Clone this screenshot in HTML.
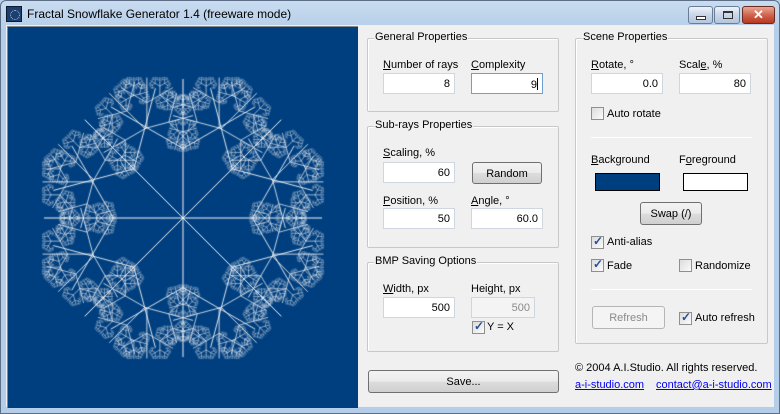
<!DOCTYPE html>
<html><head><meta charset="utf-8"><style>
*{margin:0;padding:0;box-sizing:border-box}
body{width:780px;height:414px;overflow:hidden;font-family:"Liberation Sans",sans-serif;font-size:11px;color:#000;background:#bcd3ea;position:relative}
.win{position:absolute;left:0;top:0;width:780px;height:414px;border:1px solid #5c6f86;border-radius:6px 6px 0 0;background:linear-gradient(#c9dcf0,#b4cde8 30px,#b4cde8)}
.title{position:absolute;left:27px;top:7px;font-size:12px;color:#000}
.icon{position:absolute;left:6px;top:6px;width:16px;height:16px;background:#1c3f6e;border:1px solid #0c1a30}
.icon:after{content:"";position:absolute;left:3px;top:3px;width:8px;height:8px;border-radius:50%;border:1px dotted #9cc4ec}
.tb{position:absolute;top:6px;height:18px;border:1px solid #6a7d96;border-radius:3px;background:linear-gradient(#eef3fa,#c8d6e8 50%,#b3c6de)}
.client{position:absolute;left:6px;top:25px;width:768px;height:382px;background:#f0f0f0}
canvas{position:absolute;left:7px;top:26px;border-left:1px solid #888;border-top:1px solid #888}
.abs{position:absolute;white-space:nowrap}
.grp{position:absolute;border:1px solid #c8c8c8;border-radius:2px;box-shadow:inset 1px 1px 0 #fff}
.grp span{position:absolute;left:6px;top:-8px;background:#f0f0f0;padding:0 1px}
.in{position:absolute;height:21px;background:#fff;border:1px solid #cfd6e0;text-align:right;padding:4px 4px 0 0}
.btn{position:absolute;border:1px solid #707070;border-radius:3px;background:linear-gradient(#f3f3f3,#ebebeb 50%,#dddddd 51%,#cfcfcf);text-align:center;padding-top:5px}
.cb{position:absolute;width:13px;height:13px;border:1px solid #8e8f8f;background:linear-gradient(135deg,#dcdcdc,#fbfbfb)}
.cb.on:after{content:"✓";position:absolute;left:1px;top:-3px;font-size:12px;color:#2a4e9a;font-weight:bold}
.sep{position:absolute;height:1px;background:#a0a0a0;border-bottom:1px solid #fff}
u{text-decoration:underline}
a{color:#0000ee;text-decoration:underline}
</style></head><body>
<div class="win"></div>
<div class="icon"></div>
<div class="title">Fractal Snowflake Generator 1.4 (freeware mode)</div>
<div class="tb" style="left:688px;width:25px"><div style="position:absolute;left:7px;top:9px;width:10px;height:4px;border:1px solid #333;background:#fff"></div></div>
<div class="tb" style="left:714px;width:26px"><div style="position:absolute;left:8px;top:4px;width:10px;height:8px;border:1px solid #333;border-top-width:2px"></div></div>
<div class="tb" style="left:742px;width:33px;background:linear-gradient(#e8a897,#d06550 50%,#b8371f);border-color:#6b2a1e;color:#fff;font-weight:bold;text-align:center;font-size:13px;line-height:16px">✕</div>
<div class="client"></div>
<canvas id="c" width="350" height="381"></canvas>

<div class="grp" style="left:367px;top:38px;width:192px;height:74px"><span>General Properties</span></div>
<div class="abs" style="left:383px;top:59px"><u>N</u>umber of rays</div>
<div class="abs" style="left:471px;top:59px"><u>C</u>omplexity</div>
<div class="in" style="left:383px;top:73px;width:72px">8</div>
<div class="in" style="left:471px;top:73px;width:72px;border-color:#6d9ed4">9<span style="display:inline-block;width:1px;height:12px;background:#000;vertical-align:-2px"></span></div>

<div class="grp" style="left:367px;top:126px;width:192px;height:122px"><span>Sub-rays Properties</span></div>
<div class="abs" style="left:383px;top:147px"><u>S</u>caling, %</div>
<div class="in" style="left:383px;top:162px;width:72px">60</div>
<div class="btn" style="left:472px;top:162px;width:70px;height:22px">Random</div>
<div class="abs" style="left:383px;top:195px"><u>P</u>osition, %</div>
<div class="abs" style="left:471px;top:195px"><u>A</u>ngle, °</div>
<div class="in" style="left:383px;top:208px;width:72px">50</div>
<div class="in" style="left:471px;top:208px;width:72px">60.0</div>

<div class="grp" style="left:367px;top:262px;width:192px;height:90px"><span>BMP Saving Options</span></div>
<div class="abs" style="left:383px;top:283px"><u>W</u>idth, px</div>
<div class="abs" style="left:471px;top:283px">Height, px</div>
<div class="in" style="left:383px;top:297px;width:72px">500</div>
<div class="in" style="left:471px;top:297px;width:64px;background:#f4f4f4;color:#8a8a8a">500</div>
<div class="cb on" style="left:472px;top:321px"></div>
<div class="abs" style="left:487px;top:321px">Y = X</div>
<div class="btn" style="left:368px;top:370px;width:191px;height:23px">Save...</div>

<div class="grp" style="left:575px;top:38px;width:193px;height:306px"><span>Scene Properties</span></div>
<div class="abs" style="left:591px;top:59px"><u>R</u>otate, °</div>
<div class="abs" style="left:679px;top:59px">Scal<u>e</u>, %</div>
<div class="in" style="left:591px;top:73px;width:72px">0.0</div>
<div class="in" style="left:679px;top:73px;width:72px">80</div>
<div class="cb" style="left:591px;top:107px"></div>
<div class="abs" style="left:607px;top:108px">Auto rotate</div>
<div class="sep" style="left:591px;top:137px;width:161px"></div>
<div class="abs" style="left:591px;top:154px"><u>B</u>ackground</div>
<div class="abs" style="left:679px;top:154px">F<u>o</u>reground</div>
<div style="position:absolute;left:595px;top:173px;width:65px;height:18px;background:#003f7f;border:1px solid #000"></div>
<div style="position:absolute;left:683px;top:173px;width:65px;height:18px;background:#fff;border:1px solid #000"></div>
<div class="btn" style="left:640px;top:202px;width:62px;height:23px">Swap (/)</div>
<div class="cb on" style="left:591px;top:236px"></div>
<div class="abs" style="left:607px;top:236px">Anti-alias</div>
<div class="cb on" style="left:591px;top:259px"></div>
<div class="abs" style="left:607px;top:260px">Fade</div>
<div class="cb" style="left:679px;top:259px"></div>
<div class="abs" style="left:695px;top:260px">Randomize</div>
<div class="sep" style="left:591px;top:289px;width:161px"></div>
<div class="btn" style="left:592px;top:306px;width:73px;height:23px;border-color:#b5b5b5;background:#f4f4f4;color:#8a8a8a">Refresh</div>
<div class="cb on" style="left:679px;top:312px"></div>
<div class="abs" style="left:695px;top:312px">Auto refresh</div>
<div class="abs" style="left:575px;top:362px">© 2004 A.I.Studio. All rights reserved.</div>
<div class="abs" style="left:575px;top:379px"><a>a-i-studio.com</a></div>
<div class="abs" style="left:656px;top:379px"><a>contact@a-i-studio.com</a></div>
<script>
var c=document.getElementById('c'),g=c.getContext('2d');
g.fillStyle='#003f7f';g.fillRect(0,0,350,381);
var cx=175,cy=191;
function ray(x,y,a,L,d){
 var x2=x+Math.cos(a)*L,y2=y+Math.sin(a)*L;
 g.strokeStyle='rgba(255,255,255,'+Math.max(0.2,0.95-d*0.09)+')';
 g.lineWidth=1;g.beginPath();g.moveTo(x,y);g.lineTo(x2,y2);g.stroke();
 if(d<9){var mx=x+Math.cos(a)*L*0.5,my=y+Math.sin(a)*L*0.5;
  ray(mx,my,a+Math.PI/3,L*0.6,d+1);ray(mx,my,a-Math.PI/3,L*0.6,d+1);}
}
for(var i=0;i<8;i++)ray(cx,cy,i*Math.PI/4,139,0);
</script>
</body></html>
